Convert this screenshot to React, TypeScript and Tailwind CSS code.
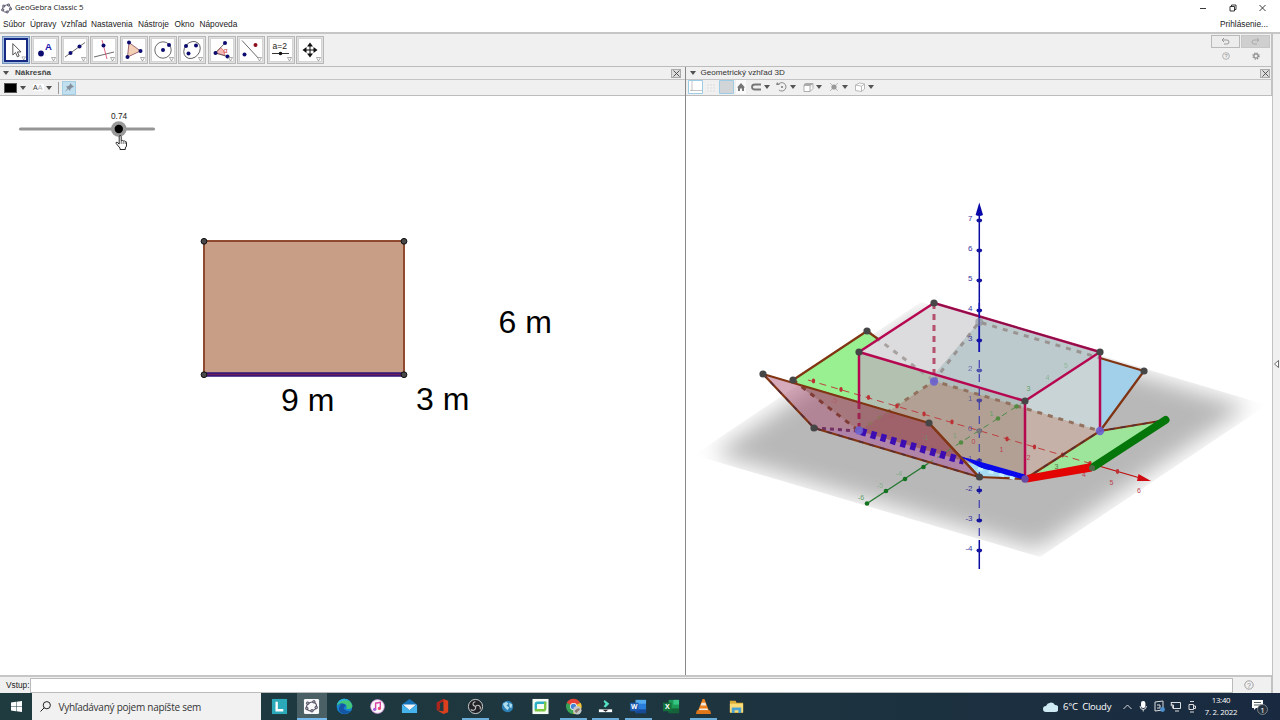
import type { ReactNode } from "react";

// Menu principal: texto y ancho de cada entrada
const menus = [
    { label: "Súbor", box: "w-[27px]" },
    { label: "Úpravy", box: "w-[31px]" },
    { label: "Vzhľad", box: "w-[30px]" },
    { label: "Nastavenia", box: "w-[47px]" },
    { label: "Nástroje", box: "w-[36.5px]" },
    { label: "Okno", box: "w-[25px]" },
    { label: "Nápoveda", box: "w-[40px]" },
];

// Punto azul que usan los iconos de las herramientas
const Dot = ({ x, y, color = "#0c0c70", r = 2 }: { x: number; y: number; color?: string; r?: number }) => (
    <circle cx={x} cy={y} r={r} fill={color} />
);

// Iconos de las herramientas, dibujados en una caja de 22x22
const tools: ReactNode[] = [
    <path d="M7.5 4v12.5l3-2.7 2 4.7 2-.9-2-4.5h4z" fill="#fff" stroke="#333" strokeWidth="0.9" />,
    <>
        <Dot x={7} y={14.5} r={2.9} />
        <text x="11" y="11" fontSize="9.500" fontWeight="bold" fill="#1818b0">A</text>
    </>,
    <>
        <path d="M1 18 21 3.500" stroke="#444" strokeWidth="0.8" />
        <Dot x={6.500} y={14} />
        <Dot x={15.500} y={7.500} />
    </>,
    <>
        <path d="M1 18 21 13" stroke="#444" strokeWidth="0.8" />
        <path d="M9 1l5 19" stroke="#d04060" strokeWidth="0.8" />
        <Dot x={10.500} y={6.500} />
    </>,
    <>
        <path d="M6 3.500 17.500 12 4.500 18z" fill="#f3cfb6" stroke="#845" strokeWidth="0.8" />
        <Dot x={6} y={3.500} />
        <Dot x={17.500} y={12} />
        <Dot x={4.500} y={18} />
    </>,
    <>
        <circle cx="11" cy="11" r="8.200" fill="none" stroke="#444" strokeWidth="0.8" />
        <Dot x={11} y={11} />
        <Dot x={17} y={6} />
    </>,
    <>
        <ellipse cx="11" cy="11" rx="9.200" ry="7.500" transform="rotate(-50 11 11)" fill="none" stroke="#444" strokeWidth="0.8" />
        <Dot x={5} y={7} />
        <Dot x={15} y={6.500} />
        <Dot x={7.500} y={14.500} />
    </>,
    <>
        <path d="M4.500 14 9.500 8.500q4 2 4.500 8z" fill="#f4b8b8" stroke="#d55" strokeWidth="0.6" />
        <path d="M4.500 14 14 4M4.500 14l12 3.500" stroke="#444" strokeWidth="0.8" />
        <text x="12.500" y="13.500" fontSize="7" fill="#c33">α</text>
        <Dot x={4.500} y={14} />
        <Dot x={14} y={4} />
        <Dot x={16.500} y={17.500} />
    </>,
    <>
        <path d="M2 1.500 20 21" stroke="#444" strokeWidth="0.8" />
        <Dot x={15.500} y={6} color="#8b1020" />
        <Dot x={4.500} y={15.500} />
    </>,
    <>
        <text x="2.500" y="10" fontSize="8.500" fill="#222">a=2</text>
        <path d="M2 14.500h17" stroke="#333" strokeWidth="1" />
        <Dot x={10.500} y={14.500} r={1.800} color="#111" />
    </>,
    <>
        <path d="M11 5v12M5 11h12" stroke="#111" strokeWidth="1" />
        <path d="M11 3.500l3 4H8zM11 18.500l3-4H8zM3.500 11l4-3v6zM18.500 11l-4-3v6z" fill="#111" />
    </>,
];

// Logo de GeoGebra: elipse con cinco puntos
const GeoLogo = ({ className }: { className: string }) => (
    <svg className={className} viewBox="0 0 16 16">
        <ellipse cx="8" cy="8" rx="6" ry="4.900" transform="rotate(-25 8 8)" fill="none" stroke="#667" strokeWidth="1.300" />
        {[[11, 3], [4, 4.500], [14, 8.500], [2.500, 10], [9, 13]].map(([x, y]) => (
            <circle key={x} cx={x} cy={y} r="1.700" fill="#aab" stroke="#334" strokeWidth="0.9" />
        ))}
    </svg>
);

// Flecha desplegable
const Caret = ({ className = "" }: { className?: string }) => (
    <svg className={`h-[4px] w-[6px] shrink-0 ${className}`} viewBox="0 0 6 4">
        <path d="M0 0h6L3 4z" fill="#505050" />
    </svg>
);

const CloseBox = () => (
    <div className="flex h-[9px] w-[10px] items-center justify-center border border-[#aaa] bg-[#ddd]">
        <svg className="h-[7px] w-[7px] shrink-0" viewBox="0 0 7 7">
            <path d="M.5.5l6 6M6.500.5l-6 6" stroke="#444" strokeWidth="0.9" />
        </svg>
    </div>
);

const Help = ({ className }: { className: string }) => (
    <svg className={className} viewBox="0 0 10 10">
        <circle cx="5" cy="5" r="4.200" fill="none" stroke="#999" strokeWidth="0.9" />
        <text x="5" y="7.500" fontSize="7" textAnchor="middle" fill="#888">?</text>
    </svg>
);

// Vista 2D con el deslizador y el rectangulo
const View2D = () => (
    <svg className="h-[579px] w-[685px] shrink-0 bg-white" viewBox="0 96 685 579">
        <path d="M20.500 129H153.500" stroke="#969696" strokeWidth="3.200" strokeLinecap="round" />
        <circle cx="118.800" cy="129" r="7.800" fill="#999" />
        <circle cx="118.800" cy="129" r="4.200" fill="#000" />
        <text x="111" y="118.800" fontSize="8.300" fill="#222">0.74</text>
        <path
            d="M119.200 144v-7.200q0-1.300 1-1.300t1 1.300v4q1.300-1 2 .2 1.300-.6 2 .5 1.300-.2 1.300 1.200v3.300l-1.200 2v1.500h-5.300v-1.500l-3.800-4.500q-.6-1.500 1-1.200z"
            fill="#fff" stroke="#111" strokeWidth="0.9"
        />
        <path d="M121.200 141v3M123.200 141.500v2.500M125.200 142v2" stroke="#111" strokeWidth="0.6" />
        <rect x="204" y="241" width="200" height="133.500" fill="#c89f86" stroke="#8c4428" strokeWidth="1.900" />
        <path d="M204 374.500h200" stroke="#30127c" strokeWidth="4.400" />
        <path d="M204 374.500h200" stroke="#6c2158" strokeWidth="1.300" />
        {[[204, 241.300], [404, 241.300], [204, 374.700], [404, 374.700]].map(([x, y]) => (
            <circle key={`${x}-${y}`} cx={x} cy={y} r="2.900" fill="#484848" stroke="#111" strokeWidth="1" />
        ))}
        <g fontSize="32" fill="#000">
            <text x="498.500" y="333.300">6 m</text>
            <text x="281" y="411">9 m</text>
            <text x="416" y="410">3 m</text>
        </g>
    </svg>
);

// Marcas de los ejes: [x, y]
const xTicks = [[799.500, 381], [824.500, 389.500], [849, 397.500], [874.500, 406], [898.500, 414], [923.500, 422], [973, 439], [997.500, 447], [1022, 455], [1047, 463.500], [1071.500, 471.500]].map(
    ([, y], i) => [[813.500, 841, 868.500, 897, 924, 952, 1007, 1034.500, 1062.500, 1090, 1117.500][i], y] as const,
);
const yTicks = [[867, 503.500], [886, 491], [905, 479], [923.500, 467], [961, 442.500], [998, 418.500], [1016.500, 406.500]];
const zLabels = ["7", "6", "5", "4", "3", "2", "1", "0", "-1", "-2", "-3", "-4"];

// Vista 3D: caja abierta con su desarrollo
const View3D = () => (
    <svg className="h-[579px] w-[586px] shrink-0 bg-white" viewBox="686 96 586 579">
        <defs>
            <filter id="soft" x="-20%" y="-20%" width="140%" height="140%">
                <feGaussianBlur stdDeviation="11" />
            </filter>
            <clipPath id="floor">
                <path d="M694 455 921 302 1267 405 1040 557z" />
            </clipPath>
        </defs>
        <g clipPath="url(#floor)">
            <path d="M725 452 925 317 1236 408 1036 544z" fill="#b8b8b8" stroke="#b8b8b8" strokeWidth="10" filter="url(#soft)" />
        </g>

        {/* Caras abatidas */}
        <path d="M934 381 867 331 793 380 859 431z" fill="#99f090" />
        <path d="M979 322 1144 371 1100 431z" fill="#a2cfe9" />
        <path d="M1025 479 1092 468 1166 420 1100 431z" fill="#9de59a" />
        <path d="M859 431 1025 479 979 477 814 428z" fill="#b7b4dc" />
        <path d="M965 460 1025 479 979 477z" fill="#a8dcf0" />

        {/* Caras de la caja, vistas a traves de las transparentes */}
        <path d="M859 352 934 303 979 316V322L934 375z" fill="#dcdbdd" />
        <path d="M979 316 1100 352 1025 401 934 375 979 322z" fill="#bdcacd" />
        <path d="M859 352 934 375V381L859 431z" fill="#b3c2b0" />
        <path d="M934 374 1025 401V408L934 381z" fill="#b0bdbc" />
        <path d="M859 431 934 381 1025 408V479z" fill="#b2a094" />
        <path d="M1025 401 1100 352V431L1025 408z" fill="#c9d4d6" />
        <path d="M1025 408 1100 431 1025 479z" fill="#c5b1a7" />
        <path d="M797 384 859 401V431z" fill="#a3a08a" />

        <path d="M763 374 929 423 979 477 814 428z" fill="#a94d70" fillOpacity="0.48" />
        <path d="M859 403 929 423 965 461 859 431z" fill="#853840" fillOpacity="0.35" />

        {/* Aristas ocultas */}
        <g fill="none" strokeWidth="3">
            <path d="M867 331 934 381" stroke="#a7a29f" strokeDasharray="5 6" />
            <path d="M934 381 979 322 1100 358" stroke="#999492" strokeDasharray="5 6" />
            <path d="M859 431 934 381 1100 431" stroke="#92715f" strokeDasharray="5 6" />
            <path d="M793 380 859 431" stroke="#803b35" strokeDasharray="5 6" />
            <path d="M934 303V381" stroke="#b6506f" strokeDasharray="6 5" />
            <path d="M814 428 859 431" stroke="#713062" strokeDasharray="4 4" />
            <path d="M859 403V431" stroke="#9d2450" strokeDasharray="6 4" />
        </g>

        {/* Eje X */}
        <path d="M808 380 1092 464" stroke="#bf3f3f" strokeWidth="1" strokeDasharray="7 5" />
        <path d="M1092 464 1140 478" stroke="#c00c0c" strokeWidth="1.300" />
        <path d="M1138.500 474 1151 481 1137 481z" fill="#d00c12" />
        {xTicks.map(([x, y]) => (
            <ellipse key={x} cx={x} cy={y} rx="1.700" ry="2.400" fill="#bd3034" />
        ))}
        {/* Eje Y */}
        <path d="M867 503.500 928 463.500" stroke="#23772e" strokeWidth="1.300" />
        <path d="M928 463.500 1025 401" stroke="#4d8b48" strokeWidth="1" strokeDasharray="6 5" />
        {yTicks.map(([x, y]) => (
            <circle key={x} cx={x} cy={y} r="2.300" fill={x < 930 ? "#147321" : "#548b42"} />
        ))}
        {/* Eje Z */}
        <path d="M979.300 212V352M979.300 540V569" stroke="#0c0ca0" strokeWidth="1.500" />
        <path d="M979.300 360V540" stroke="#4848af" strokeWidth="1.300" strokeDasharray="8 6" />
        <path d="M979.300 202.500 983 215q-3.700 2-7.400 0z" fill="#0808aa" />
        {zLabels.map((label, i) => (
            <g key={label} opacity={i > 4 && i < 9 ? 0.65 : 1}>
                <ellipse cx="979.300" cy={220.500 + i * 30} rx="2.800" ry="1.900" fill="#1414a0" />
                <text x="972.500" y={221.300 + i * 30} fontSize="8" textAnchor="end" fill="#3434a2">{label}</text>
            </g>
        ))}
        <circle cx="979.300" cy="431" r="2.600" fill="#777" />

        <g fontSize="7" textAnchor="middle">
            <g fill="#bb4250">
                <text x="973.500" y="444">0</text>
                <text x="1001.500" y="452">1</text>
                <text x="1028.500" y="460">2</text>
                <text x="1084" y="477">4</text>
                <text x="1111.500" y="484.500">5</text>
                <text x="1139" y="492.500">6</text>
                <text x="891" y="418" opacity="0.5">-3</text>
                <text x="834" y="403" opacity="0.5">-5</text>
            </g>
            <text x="1056.500" y="468.500" fill="#587b42">3</text>
            <g fill="#5da267">
                <text x="861" y="500">-6</text>
                <text x="880" y="488" opacity="0.5">-5</text>
                <text x="899" y="476" opacity="0.6">-4</text>
                <text x="925" y="440" opacity="0.6">-1</text>
                <text x="955" y="438" opacity="0.7">1</text>
                <text x="991.500" y="416">1</text>
                <text x="1028.500" y="391">3</text>
                <text x="1047.500" y="380" opacity="0.6">4</text>
                <text x="1066" y="368" opacity="0.5">5</text>
            </g>
        </g>

        {/* Aristas visibles de las caras abatidas */}
        <g fill="none" stroke="#803412" strokeWidth="2.200" strokeLinejoin="round">
            <path d="M878 339 867 331 793 380" />
            <path d="M763 374 929 423 979 477 814 428z" />
            <path d="M979 477 1025 479 1100 431 1166 420" />
            <path d="M1100 358 1144 371 1100 431" />
        </g>
        <path d="M763 374 814 428 979 477M1025 479 1100 431 1166 420" fill="none" stroke="#542d39" strokeWidth="1.500" strokeDasharray="5 6" />

        {/* Aristas de la caja */}
        <g fill="none" stroke="#b60851" strokeWidth="2.500" strokeLinejoin="round">
            <path d="M859 352 934 303 1100 352 1025 401z" />
            <path d="M859 352V403M1025 401V479M1100 352V431" />
        </g>
        <path d="M934 303 1100 352" stroke="#851148" strokeWidth="1.300" />

        {/* Segmentos resaltados */}
        <path d="M861 431.500 964 461" stroke="#3c0db2" strokeWidth="7.500" strokeDasharray="5.500 4.800" />
        <path d="M962 457.500 967 458 1025 474.500V480L981 468z" fill="#0808eb" />
        <path d="M978 468.500 1016 479" stroke="#c8f0ff" strokeWidth="3" strokeDasharray="5 6" />
        <path d="M929 423 979 477" stroke="#823717" strokeWidth="2.300" />
        <path d="M1027 475 1091 463 1092 471.500 1027 482.500z" fill="#e30404" />
        <path d="M1094 466.500 1165.500 420" stroke="#057609" strokeWidth="8" strokeLinecap="round" />
        <path d="M979.300 303V352" stroke="#1111b5" strokeWidth="1.500" />

        {/* Vertices */}
        {[[934, 303], [859, 352], [1025, 401], [1100, 352], [867, 331], [793, 380], [763, 374], [814, 428], [929, 423], [979.500, 477], [1144, 371]].map(([x, y]) => (
            <circle key={`${x}-${y}`} cx={x} cy={y} r="3.600" fill="#464646" />
        ))}
        <circle cx="979.300" cy="322" r="4" fill="#888c98" opacity="0.6" />
        {[[934, 381.500], [859, 430.500], [1100, 431]].map(([x, y]) => (
            <circle key={x} cx={x} cy={y} r="4.200" fill="#6a62d2" opacity="0.9" />
        ))}
        <circle cx="1025" cy="479" r="3.700" fill="#694ba4" />
        <circle cx="1092" cy="468" r="3" fill="#516948" />
    </svg>
);

// Aplicaciones ancladas en la barra de tareas
const apps: { name: string; open?: boolean; active?: boolean; icon: ReactNode }[] = [
    { name: "l", icon: <><path d="M1 1h16v16H1z" fill="#2ba9b8" /><path d="M6 4v9h7" stroke="#fff" strokeWidth="2.500" fill="none" /></> },
    { name: "geogebra", active: true, icon: <><rect x="1" y="1" width="16" height="16" rx="1.500" fill="#f8f8fb" /><g><ellipse cx="9" cy="9" rx="5.500" ry="4.500" transform="rotate(-25 9 9)" stroke="#556" strokeWidth="1.200" fill="none" />{[[11.500, 4], [5, 5.500], [14, 10], [4, 11], [9.500, 13.500]].map(([x, y]) => <circle key={x} cx={x} cy={y} r="1.400" fill="#99a" stroke="#334" strokeWidth="0.7" />)}</g></> },
    { name: "edge", icon: <><circle cx="9" cy="9" r="8.300" fill="#1684ce" /><path d="M1 8C2-1 15-1 17.300 8c.3 4-5 4.500-6.500 3C13 8 9 3 1 8z" fill="#42c779" /><path d="M1 8c4-4 10-2 9 1-3 0-3 5 5 5-5 5-11 3-12-2 0-2 1-4 3-5-2 0-4 0-5 1z" fill="#1555a3" /><path d="M1 7.500C3 0 11-.5 14 3 9 1.500 4 3 1 7.500z" fill="#2ab5df" /></> },
    { name: "itunes", icon: <><circle cx="9" cy="9" r="7.300" fill="#fafafa" stroke="#cf89d9" strokeWidth="0.8" /><path d="M7 12V5.500l5-1V11" stroke="#d943a4" strokeWidth="1.500" fill="none" /><circle cx="6" cy="12" r="1.700" fill="#a557dd" /><circle cx="11" cy="11" r="1.700" fill="#ee4979" /></> },
    { name: "mail", icon: <><path d="M1 7l8-6 8 6v9H1z" fill="#1672b6" /><path d="M2 7h14l-7 6z" fill="#f2f6fa" /><path d="M1 7l8 6 8-6v9H1z" fill="#45b4ec" /></> },
    { name: "office", icon: <><path d="M3 5l7-4 5 2v12l-5 2-7-4 7 1V4L6 5v7l-3 1z" fill="#dc3f1e" /><path d="M3 5l7-4v3L6 5v7l-3 1z" fill="#ae211c" /></> },
    { name: "obs", open: true, icon: <><circle cx="9" cy="9" r="7.500" fill="#202126" stroke="#d6d6d6" strokeWidth="1" /><path d="M9 9C5 8 6 4 9 4M9 9c3-3 6 0 5 3M9 9c1 4-3 5-5 3" stroke="#bbb" strokeWidth="1.200" fill="none" /></> },
    { name: "globe", icon: <><circle cx="9" cy="9" r="6" fill="#2b81b5" /><path d="M4 6l4-2 2 2-2 2 3 2-2 3-3-3zM11 5l3 2-1 4-2-2z" fill="#addcec" /></> },
    { name: "camtasia", icon: <><path d="M.5 1h17v16H.5z" fill="#f4fbf3" /><path d="M4 13V7q0-2 2-2h9" stroke="#2bafc5" strokeWidth="2.500" fill="none" /><path d="M3 13h9q2 0 2-2V4" stroke="#7bc744" strokeWidth="2.500" fill="none" /></> },
    { name: "chrome", open: true, icon: <><circle cx="9" cy="9" r="8" fill="#39a457" /><path d="M9 9 2 5a8 8 0 0 1 14 0z" fill="#e54335" /><path d="M9 9l7.500-4A8 8 0 0 1 9 17z" fill="#f6c534" /><circle cx="9" cy="9" r="3.700" fill="#fff" /><circle cx="9" cy="9" r="2.900" fill="#4285d5" /><circle cx="13" cy="13" r="4.500" fill="#c6c9ca" /><path d="M10 14q4-5 6-2l-4 4z" fill="#8a7970" /></> },
    { name: "filmora", open: true, icon: <><path d="M8 2l5 4-4 4-2-1 2-3-2-2z" fill="#55dfc5" /><path d="M2 12h14v3H2z" fill="#fff" /><path d="M6 12.500h6l-3 2z" fill="#222" /></> },
    { name: "word", open: true, icon: <><path d="M6 2h11v14H6z" fill="#2a7edb" /><path d="M6 2h11v4H6z" fill="#54abf0" /><path d="M6 12h11v4H6z" fill="#164b99" /><path d="M0 5h9v9H0z" fill="#1b58ae" /><text x="4.500" y="12" fontSize="7" fontWeight="bold" textAnchor="middle" fill="#fff">W</text></> },
    { name: "excel", icon: <><path d="M6 2h11v14H6z" fill="#1d9a58" /><path d="M11 2h6v5h-6z" fill="#37c684" /><path d="M6 11h11v5H6z" fill="#156439" /><path d="M0 5h9v9H0z" fill="#13713c" /><text x="4.500" y="12" fontSize="7.500" fontWeight="bold" textAnchor="middle" fill="#fff">X</text></> },
    { name: "vlc", open: true, icon: <><path d="M8 1h2l5 13H3z" fill="#ef821e" /><path d="M7 5h4l1 3H6zM5 11h8l1 2H4z" fill="#f3e9dc" /><path d="M2 13h14l1 4H1z" fill="#df761a" /></> },
    { name: "folder", icon: <><path d="M2 3h6l1 2h7v11H2z" fill="#dcae38" /><path d="M2 6h14v9H2z" fill="#f9dc78" /><path d="M4 10h10v6h-3v-3H7v3H4z" fill="#4aa2d3" /></> },
];

const App = () => (
    <div className="flex h-[720px] w-[1280px] flex-col overflow-hidden bg-[#f0f0f0] font-['Liberation_Sans',sans-serif] text-[8.3px] leading-none text-[#222]">
        {/* Barra de titulo */}
        <div className="flex h-[16px] shrink-0 items-center bg-white">
            <GeoLogo className="ml-[1px] h-[11px] w-[11px]" />
            <span className="ml-[3px] font-['Open_Sans',sans-serif] text-[7.8px] tracking-[-0.08px]">GeoGebra Classic 5</span>
            <svg className="ml-auto mr-[12px] h-[10px] w-[70px]" viewBox="0 0 70 10">
                <path d="M2 5.500h6M61.500 2l6 6M67.500 2l-6 6" stroke="#222" strokeWidth="0.9" />
                <path d="M32 3.500h4.500v4.500H32zM33.500 3.500V2H38v4.500h-1.500" stroke="#222" strokeWidth="0.9" fill="none" />
            </svg>
        </div>

        {/* Menu */}
        <div className="flex h-[18px] shrink-0 items-center border-b-2 border-[#c6c6c6] bg-white pl-[3px] pt-px">
            {menus.map((m) => (
                <span key={m.label} className={`shrink-0 whitespace-nowrap ${m.box}`}>{m.label}</span>
            ))}
            <span className="ml-auto mr-[12px]">Prihlásenie...</span>
        </div>

        <div className="flex h-[659px] shrink-0">
            <div className="flex w-[1273px] flex-col border-r-2 border-[#c2c2c2]">
                {/* Herramientas */}
                <div className="flex h-[33px] shrink-0 items-center gap-[1.4px] border-b border-[#bcbcbc] pl-[2px]">
                    {tools.map((icon, i) => (
                        <div key={i} className={`flex h-[28px] w-[28px] shrink-0 items-center justify-center border ${i === 0 ? "border-[#7794bf] bg-[#a9c0e3]" : "border-[#b8b8b8] bg-[#e0e0e0]"}`}>
                            <svg className={`h-[24px] w-[24px] shrink-0 bg-white ${i === 0 ? "border-2 border-[#152b83]" : "border border-[#d4d4d4]"}`} viewBox="0 0 22 22">
                                {icon}
                                <path d="M17.500 18.500h4L19.500 22z" fill="#fff" stroke="#777" strokeWidth="0.6" />
                            </svg>
                        </div>
                    ))}
                    <div className="mb-[4px] ml-auto mr-[1px] grid grid-cols-2 gap-x-[1px] gap-y-[2px]">
                        <div className="flex h-[13px] w-[29px] items-center justify-center border border-[#b9b9b9] bg-[#ececec]">
                            <svg className="h-[7px] w-[9px]" viewBox="0 0 9 7"><path d="M3 0 1 2l2 2M1 2h5q2 0 2 2t-2 2H3" fill="none" stroke="#999" /></svg>
                        </div>
                        <div className="flex h-[13px] w-[29px] items-center justify-center border border-[#c6c6c6] bg-[#cfcfcf]">
                            <svg className="h-[7px] w-[9px]" viewBox="0 0 9 7"><path d="M6 0l2 2-2 2M8 2H3Q1 2 1 4t2 2h3" fill="none" stroke="#aaa" /></svg>
                        </div>
                        <div className="flex h-[11px] items-center justify-center"><Help className="h-[8px] w-[8px]" /></div>
                        <div className="flex h-[11px] items-center justify-center">
                            <svg className="h-[8px] w-[8px]" viewBox="0 0 8 8">
                                <circle cx="4" cy="4" r="2.900" fill="none" stroke="#888" strokeWidth="1.500" strokeDasharray="1.300 1" />
                                <circle cx="4" cy="4" r="2" fill="none" stroke="#888" />
                            </svg>
                        </div>
                    </div>
                </div>

                <div className="flex h-[608px] shrink-0">
                    {/* Panel 2D */}
                    <div className="flex w-[686px] shrink-0 flex-col border-r border-[#888]">
                        <div className="flex h-[13px] shrink-0 items-center border-b border-[#c4c4c4] pl-[3px] pr-[4px] font-bold text-[#444]">
                            <Caret />
                            <span className="ml-[6px] text-[8px]">Nákresňa</span>
                            <div className="ml-auto"><CloseBox /></div>
                        </div>
                        <div className="flex h-[16px] shrink-0 items-center border-b border-[#bcbcbc] pl-[4px]">
                            <div className="h-[10px] w-[13px] border border-[#555] bg-black" />
                            <Caret className="ml-[3px]" />
                            <div className="ml-[7px] flex w-[11px] items-baseline bg-white text-[7px] text-[#333]">A<span className="text-[#aaa]">A</span></div>
                            <Caret className="ml-[2px]" />
                            <div className="ml-[6px] h-[12px] w-px bg-[#999]" />
                            <div className="ml-[3px] flex h-[14px] w-[14px] items-center justify-center border border-[#a6cee2] bg-[#c0e0ef]">
                                <svg className="h-[9px] w-[9px]" viewBox="0 0 9 9"><path d="M5 0l4 4-2 .5L5.500 6 5 8 3.200 6 0 9l2.500-3.700L1 3.500 3.500 3 5 1.500z" fill="#858f9c" /></svg>
                            </div>
                        </div>
                        <View2D />
                    </div>

                    {/* Panel 3D */}
                    <div className="flex w-[586px] shrink-0 flex-col overflow-hidden">
                        <div className="flex h-[13px] shrink-0 items-center border-b border-[#c4c4c4] pl-[4px] pr-[2px] text-[#333]">
                            <Caret />
                            <span className="ml-[4.500px] text-[8.1px]">Geometrický vzhľad 3D</span>
                            <div className="ml-auto"><CloseBox /></div>
                        </div>
                        <div className="flex h-[16px] shrink-0 items-center border-b border-[#bcbcbc] pl-[2px]">
                            <svg className="h-[15px] w-[190px]" viewBox="688 80 190 15">
                                <path d="M688.500 80.500h14v13h-14z" fill="#fff" stroke="#9dcde5" />
                                <path d="M692 81v10M690 90.500h12" stroke="#aaa" strokeWidth="0.7" />
                                <path d="M706 83h10v9h-10z" fill="#f8f8f8" />
                                <path d="M706 85h10M706 88h10M706 91h10M708 83v9M711 83v9M714 83v9" stroke="#ddd" strokeWidth="0.7" />
                                <path d="M719.500 80.500h14v13h-14z" fill="#d2d5d7" stroke="#9dcde5" />
                                <path d="M736 80h10v14h-10z" fill="#fafafa" />
                                <path d="M737 87.500 741 83l4 4.500h-1V91h-2v-2.500h-2V91h-2v-3.500z" fill="#777" />
                                <path d="M761 84.500h-6q-3 0-3 2.500t3 2.500h6" stroke="#777" strokeWidth="1.800" fill="none" />
                                <path d="M778 85a4.200 4.200 0 1 1 1 5" stroke="#888" fill="none" />
                                <path d="M777 82l3 3h-4z" fill="#888" /><circle cx="782" cy="87" r="1" fill="#777" />
                                <path d="M804 85.500h6v6h-6zM804 85.500l2-2h7l-3 2M813 83.500v5l-3 3" stroke="#999" fill="#fff" strokeWidth="0.8" />
                                <path d="M804 84l2-1h7l-2 2h-7z" fill="#aaa" />
                                <path d="M830 83l8 8M838 83l-8 8" stroke="#bbb" strokeWidth="1" />
                                <circle cx="834" cy="87" r="2.600" fill="#999" />
                                <path d="M855.500 85l4-2 5 1v5l-3 2.500-6-1zM855.500 85l6 1.200v5M861.500 86.200l3-2.200" stroke="#aaa" fill="#fff" strokeWidth="0.8" />
                                <path d="M764 85h6l-3 4zM790 85h6l-3 4zM816 85h6l-3 4zM842 85h6l-3 4zM868 85h6l-3 4z" fill="#555" />
                            </svg>
                        </div>
                        <View3D />
                    </div>
                </div>

                {/* Campo de entrada */}
                <div className="flex h-[18px] shrink-0 items-center border-t-2 border-[#c6c6c6] pl-[6px]">
                    <span className="w-[24px] whitespace-nowrap">Vstup:</span>
                    <div className="h-[15px] w-[1203px] border border-[#bbb] bg-white" />
                    <Help className="ml-[11px] h-[10px] w-[10px]" />
                </div>
            </div>
            <div className="flex flex-1 items-center justify-center">
                <svg className="h-[8px] w-[5px]" viewBox="0 0 5 8"><path d="M4.500.5v7L.5 4z" fill="#fff" stroke="#333" strokeWidth="0.7" /></svg>
            </div>
        </div>

        {/* Barra de tareas */}
        <div className="flex h-[27px] shrink-0 items-center bg-linear-to-r from-[#1f3b40] via-[#1e363f] to-[#192a40] font-['Open_Sans',sans-serif] text-white">
            <div className="flex w-[32px] justify-center">
                <svg className="h-[11px] w-[11px]" viewBox="0 0 11 11"><path d="M0 1.500 5 .8v4.400H0zM5.500.7 11 0v5.200H5.500zM0 5.700h5v4.500l-5-.7zM5.500 5.700H11V11l-5.500-.8z" fill="#fff" /></svg>
            </div>
            <div className="flex h-full w-[229px] items-center bg-[#f1f1f1] pl-[8px] text-[#333]">
                <svg className="h-[11px] w-[11px]" viewBox="0 0 11 11"><circle cx="6.800" cy="4.200" r="3.600" fill="none" stroke="#222" /><path d="M4.300 6.700.5 10.500" stroke="#222" /></svg>
                <span className="ml-[7.500px] pt-px text-[10px] tracking-[-0.25px]">Vyhľadávaný pojem napíšte sem</span>
            </div>
            <div className="ml-[2px] flex h-full">
                {apps.map((app) => (
                    <div key={app.name} className="flex h-full w-[32.65px] justify-center">
                        <div className={`flex h-full items-center justify-center pt-[2px] ${app.active ? "w-[30px] border-b-2 border-[#76b9ed] bg-[#4b6065]" : app.open ? "w-[27px] border-b-2 border-[#6caed9]" : "w-[27px] border-b-2 border-transparent"}`}>
                            <svg className="h-[17px] w-[17px]" viewBox="0 0 18 18">{app.icon}</svg>
                        </div>
                    </div>
                ))}
            </div>
            <div className="ml-auto flex h-full items-center">
                <svg className="h-[11px] w-[15px]" viewBox="0 0 15 11"><path d="M3 11a3 3 0 0 1 0-6 5 5 0 0 1 9-1 3.500 3.500 0 0 1 0 7z" fill="#cfeaf3" /></svg>
                <span className="ml-[5px] w-[60px] whitespace-nowrap pt-px text-[9.500px] tracking-[-0.25px]">6°C&nbsp; Cloudy</span>
                <svg className="h-[13px] w-[76px]" viewBox="1124 700 76 13">
                    <path d="M1124.500 709l4-4 4 4" stroke="#ddd" fill="none" />
                    <rect x="1142" y="701" width="4.400" height="7" rx="2" fill="#fff" />
                    <path d="M1141 706q0 3.500 3.200 3.500t3.200-3.500M1144.200 709v2.500" stroke="#ddd" fill="none" />
                    <path d="M1156 702l8-1v9l-8 1z" stroke="#ddd" fill="none" /><path d="M1158 705h3v3h-3" stroke="#ddd" fill="none" />
                    <circle cx="1163.500" cy="709.500" r="2.400" fill="#4f91d0" />
                    <path d="M1172 702.500h9.500v6H1174zM1176 711h4M1171.500 705h3v4" stroke="#ddd" fill="none" />
                    <path d="M1190 704.500h4.500v5H1190zM1194.500 706h2v2.500h-2M1191 701.500h4M1191 712h4" stroke="#ddd" fill="none" />
                </svg>
                <div className="flex w-[44px] flex-col items-center gap-[4px] text-[7.800px] tracking-[-0.25px]">
                    <span>13:40</span>
                    <span className="whitespace-nowrap">7. 2. 2022</span>
                </div>
                <svg className="ml-[8px] mr-[11px] h-[18px] w-[18px]" viewBox="0 0 18 18">
                    <path d="M1 2h11v8H5L3 12v-2H1z" fill="#fff" />
                    <path d="M3 4.500h7M3 7h7" stroke="#233" strokeWidth="0.8" />
                    <circle cx="11.500" cy="11.500" r="5" fill="#27323e" stroke="#8c949c" strokeWidth="0.8" />
                    <text x="11.500" y="14.500" fontSize="8" textAnchor="middle" fill="#fff">1</text>
                </svg>
            </div>
        </div>
    </div>
);

export default App;
